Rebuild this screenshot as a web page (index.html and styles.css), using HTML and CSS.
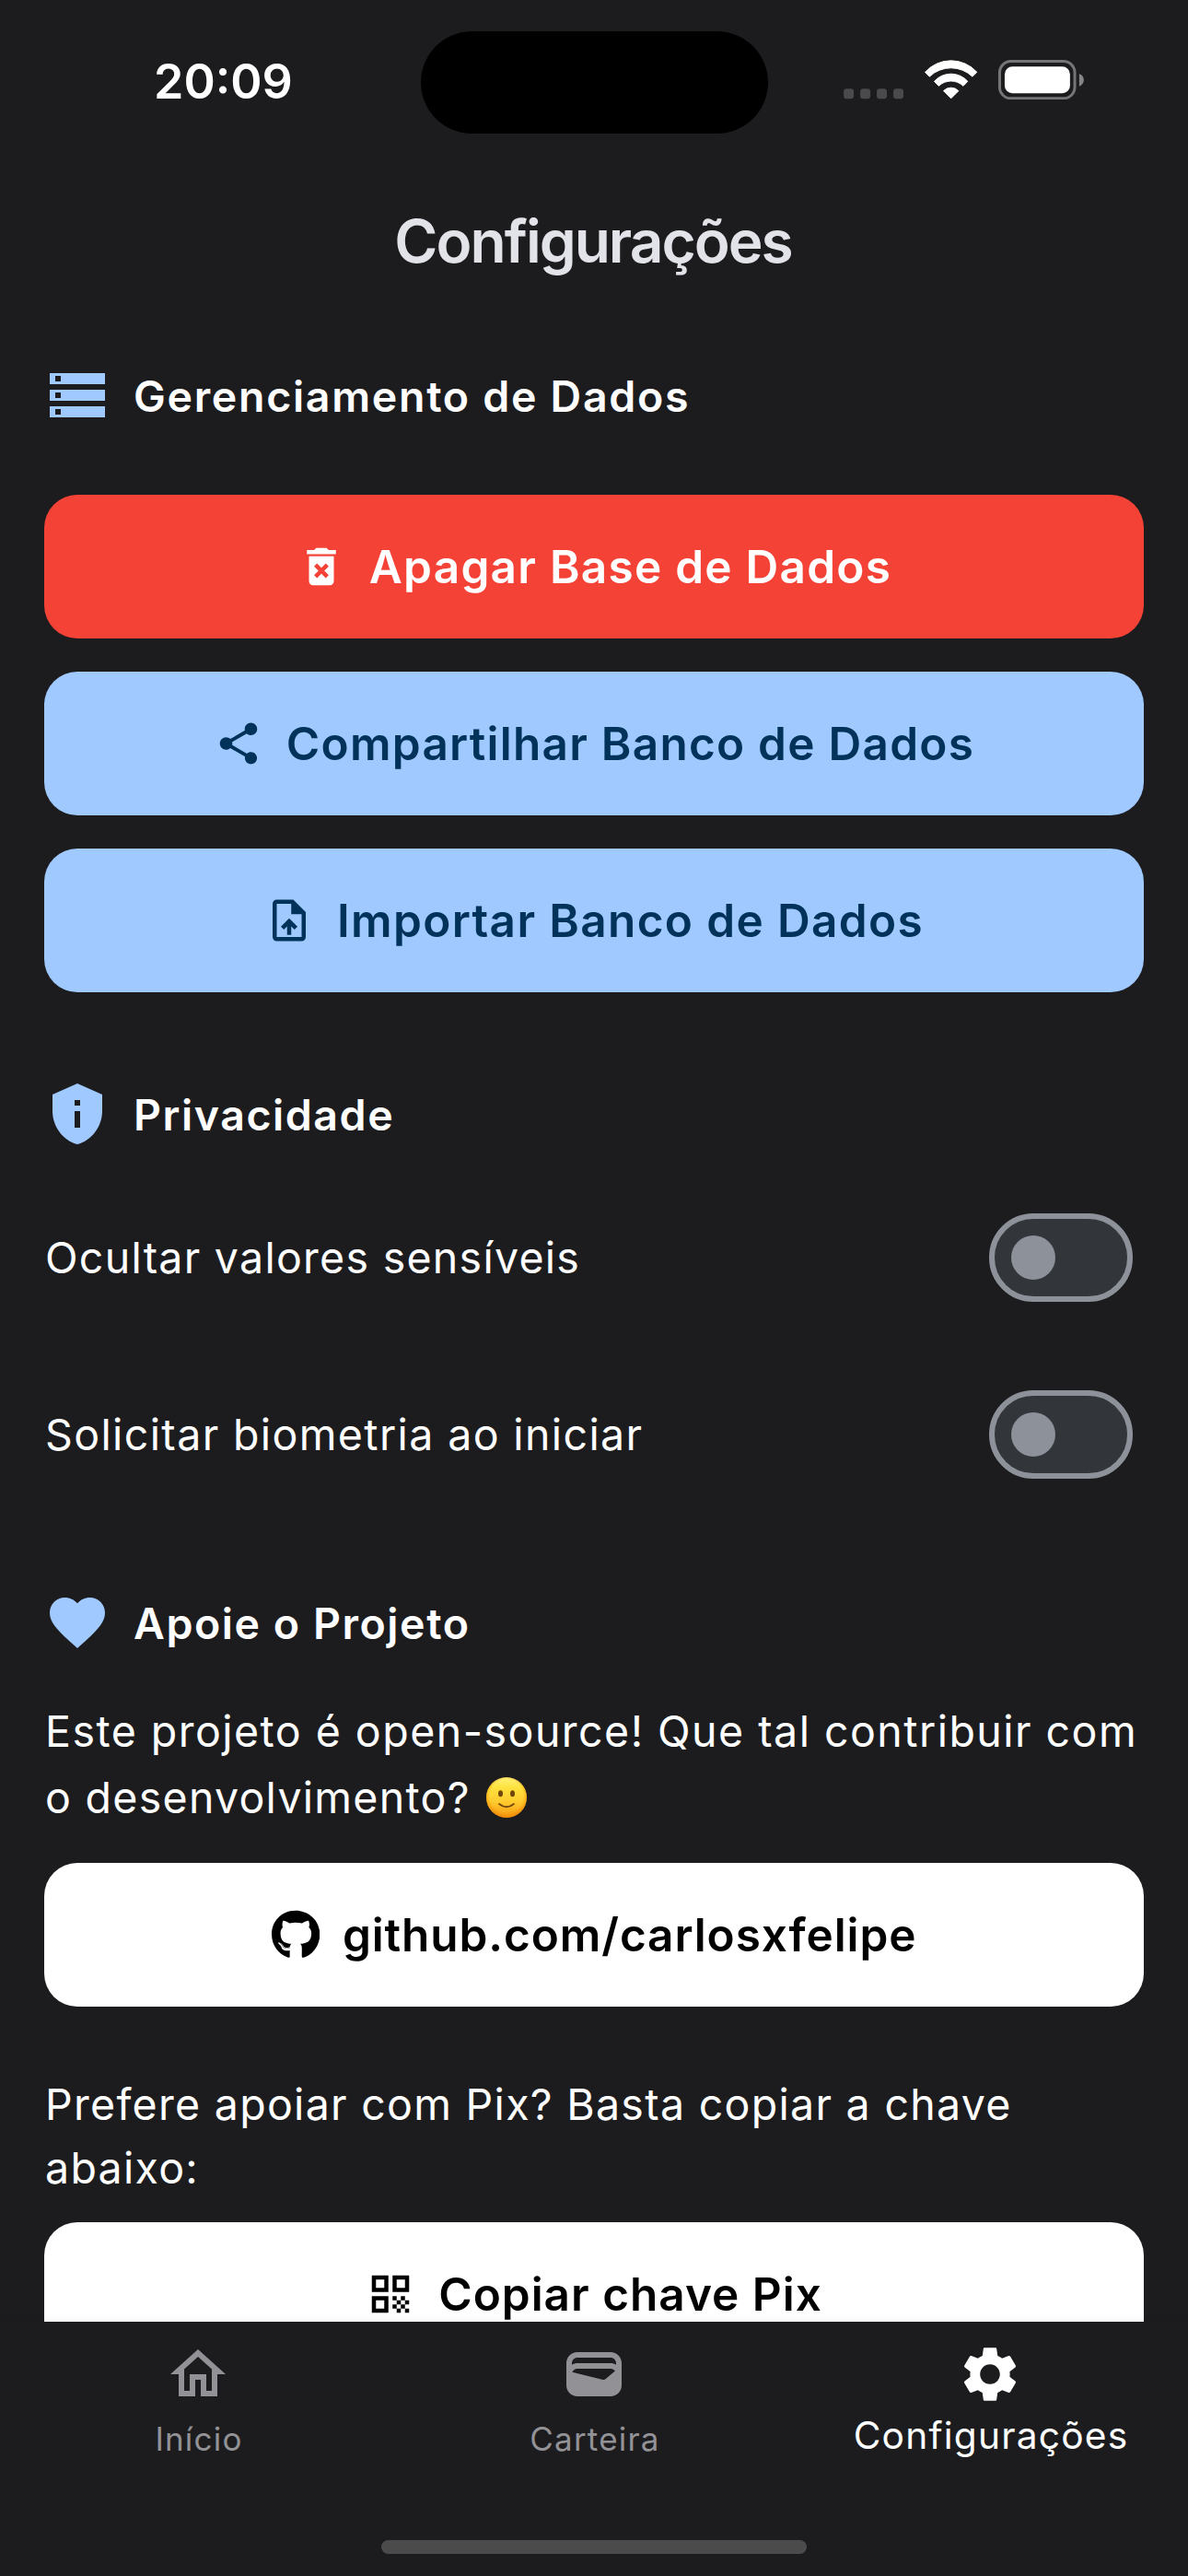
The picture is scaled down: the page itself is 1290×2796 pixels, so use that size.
FILE: index.html
```html
<!DOCTYPE html>
<html lang="pt-BR">
<head>
<meta charset="utf-8">
<title>Configurações</title>
<link rel="stylesheet" href="styles.css">
</head>
<body>
<div class="screen">
  <div class="status-bar">
    <div class="clock">20:09</div>
    <div class="island"></div>
    <svg class="indicators" viewBox="48 44 784 130" aria-hidden="true">
      <g fill="#4a4a4c">
        <rect x="48" y="138" width="33" height="33" rx="10"/>
        <rect x="102" y="138" width="33" height="33" rx="10"/>
        <rect x="156" y="138" width="33" height="33" rx="10"/>
        <rect x="210" y="138" width="33" height="33" rx="10"/>
      </g>
      <g fill="#fff" stroke="#fff" stroke-width="3" stroke-linejoin="round">
        <path d="M313.500 84A114 114 0 0 1 482.500 84L468 98.500A101 101 0 0 0 328 98.500Z"/>
        <path d="M343.500 114A73 73 0 0 1 452.500 114L438 129A58 58 0 0 0 358 129Z"/>
        <path d="M373.500 145A34 34 0 0 1 422.500 145L398 169.500Z"/>
      </g>
      <rect x="556.500" y="48.500" width="245" height="121" rx="37" fill="none" stroke="#757577" stroke-width="9"/>
      <rect x="573" y="66" width="213" height="87" rx="25" fill="#fff"/>
      <path d="M816 89C836 96 836 123 816 130Z" fill="#858587"/>
    </svg>
  </div>

  <header class="app-bar"><h1>Configurações</h1></header>

  <main class="content">
    <section class="section data">
      <div class="heading">
        <svg class="icon-lg" viewBox="0 0 24 24"><path d="M2 20h20v-4H2v4zm2-3h2v2H4v-2zM2 4v4h20V4H2zm4 3H4V5h2v2zm-4 7h20v-4H2v4zm2-3h2v2H4v-2z"/></svg>
        <h2 class="ls-data">Gerenciamento de Dados</h2>
      </div>
      <div class="buttons">
        <button class="btn danger">
          <svg class="icon-sm" viewBox="0 0 24 24"><path d="M6 19c0 1.100.9 2 2 2h8c1.100 0 2-.9 2-2V7H6v12zm2.460-7.120l1.410-1.410L12 12.590l2.120-2.120 1.410 1.410L13.410 14l2.120 2.120-1.410 1.410L12 15.410l-2.120 2.120-1.410-1.410L10.590 14l-2.130-2.120zM15.500 4l-1-1h-5l-1 1H5v2h14V4z"/></svg>
          <span>Apagar Base de Dados</span>
        </button>
        <button class="btn primary">
          <svg class="icon-sm" viewBox="0 0 24 24"><path d="M18 16.080c-.76 0-1.440.3-1.960.77L8.910 12.700c.05-.23.09-.46.09-.7s-.04-.47-.09-.7l7.050-4.110c.54.5 1.250.81 2.040.81 1.660 0 3-1.340 3-3s-1.340-3-3-3-3 1.340-3 3c0 .24.04.47.09.7L8.040 9.810C7.500 9.310 6.790 9 6 9c-1.660 0-3 1.340-3 3s1.340 3 3 3c.79 0 1.500-.31 2.040-.81l7.120 4.160c-.05.21-.08.43-.08.65 0 1.610 1.310 2.920 2.920 2.920s2.920-1.310 2.920-2.920-1.310-2.920-2.920-2.920z"/></svg>
          <span>Compartilhar Banco de Dados</span>
        </button>
        <button class="btn primary import">
          <svg class="icon-sm" viewBox="0 0 24 24"><path d="M14 2H6c-1.100 0-1.990.9-1.990 2L4 20c0 1.100.89 2 1.990 2H18c1.100 0 2-.9 2-2V8l-6-6zm4 18H6V4h7v5h5v11zM8 15.010l1.410 1.410L11 14.840V19h2v-4.160l1.590 1.590L16 15.010 12.010 11z"/></svg>
          <span>Importar Banco de Dados</span>
        </button>
      </div>
    </section>

    <section class="section privacy">
      <div class="heading">
        <svg class="icon-lg" viewBox="0 0 24 24"><path d="M12 1L3 5v6c0 5.550 3.840 10.740 9 12 5.160-1.260 9-6.450 9-12V5L12 1zm-1 6h2v2h-2V7zm0 4h2v6h-2v-6z"/></svg>
        <h2>Privacidade</h2>
      </div>
      <div class="setting">
        <span class="ls-hide">Ocultar valores sensíveis</span>
        <div class="switch" role="switch" aria-checked="false"><i class="knob"></i></div>
      </div>
      <div class="setting">
        <span class="ls-bio">Solicitar biometria ao iniciar</span>
        <div class="switch" role="switch" aria-checked="false"><i class="knob"></i></div>
      </div>
    </section>

    <section class="section support">
      <div class="heading">
        <svg class="icon-lg" viewBox="0 0 24 24"><path d="M12 21.350l-1.450-1.320C5.400 15.360 2 12.280 2 8.500 2 5.420 4.420 3 7.500 3c1.740 0 3.410.81 4.500 2.090C13.090 3.810 14.760 3 16.500 3 19.580 3 22 5.420 22 8.500c0 3.780-3.400 6.860-8.550 11.540L12 21.350z"/></svg>
        <h2>Apoie o Projeto</h2>
      </div>
      <p class="contribute"><span class="ls-open">Este projeto é open-source! Que tal contribuir com</span><br><span class="ls-dev">o desenvolvimento?</span><svg class="smile" viewBox="0 0 44 44" role="img" aria-label="🙂">
        <defs>
          <linearGradient id="face" x1="0" y1="0" x2="0" y2="1"><stop offset="0" stop-color="#fff27a"/><stop offset=".25" stop-color="#ffe23e"/><stop offset=".6" stop-color="#ffcb2e"/><stop offset="1" stop-color="#f79a12"/></linearGradient>
          <radialGradient id="rim" cx=".5" cy=".46" r=".54"><stop offset=".75" stop-color="#f08a00" stop-opacity="0"/><stop offset="1" stop-color="#e87d00" stop-opacity=".65"/></radialGradient>
        </defs>
        <circle cx="22" cy="22" r="22" fill="url(#face)"/>
        <circle cx="22" cy="22" r="22" fill="url(#rim)"/>
        <ellipse cx="15.500" cy="17.800" rx="2.500" ry="3.500" fill="#704709"/>
        <ellipse cx="28.500" cy="17.800" rx="2.500" ry="3.500" fill="#704709"/>
        <path d="M14 29Q22 35.500 30 29" fill="none" stroke="#704709" stroke-width="1.700" stroke-linecap="round"/>
      </svg></p>
      <button class="btn light github">
        <svg class="icon-gh" viewBox="0 0 496 512"><path d="M165.900 397.400c0 2-2.300 3.600-5.200 3.600-3.300.3-5.600-1.300-5.600-3.600 0-2 2.300-3.600 5.200-3.600 3-.3 5.600 1.300 5.600 3.600zm-31.100-4.500c-.7 2 1.300 4.300 4.300 4.900 2.600 1 5.600 0 6.200-2s-1.300-4.300-4.300-5.200c-2.600-.7-5.500.3-6.200 2.300zm44.200-1.700c-2.900.7-4.900 2.600-4.600 4.900.3 2 2.900 3.300 5.900 2.600 2.900-.7 4.900-2.600 4.600-4.600-.3-1.900-3-3.200-5.900-2.900zM244.800 8C106.100 8 0 113.300 0 252c0 110.900 69.800 205.800 169.500 239.200 12.800 2.300 17.300-5.600 17.300-12.100 0-6.200-.3-40.400-.3-61.400 0 0-70 15-84.700-29.800 0 0-11.400-29.100-27.800-36.600 0 0-22.900-15.700 1.600-15.400 0 0 24.900 2 38.600 25.800 21.900 38.600 58.600 27.500 72.900 20.900 2.300-16 8.800-27.100 16-33.700-55.900-6.200-112.300-14.300-112.300-110.500 0-27.500 7.600-41.300 23.600-58.900-2.600-6.500-11.100-33.300 2.600-67.900 20.900-6.500 69 27 69 27 20-5.600 41.500-8.500 62.800-8.500s42.800 2.900 62.800 8.500c0 0 48.100-33.600 69-27 13.700 34.700 5.200 61.400 2.600 67.900 16 17.700 25.800 31.500 25.800 58.900 0 96.500-58.900 104.200-114.800 110.500 9.200 7.900 17 22.900 17 46.400 0 33.700-.3 75.400-.3 83.600 0 6.500 4.600 14.400 17.300 12.100C428.200 457.800 496 362.900 496 252 496 113.300 383.500 8 244.800 8zM97.200 352.900c-1.300 1-1 3.300.7 5.200 1.600 1.600 3.900 2.300 5.200 1 1.300-1 1-3.300-.7-5.200-1.600-1.600-3.900-2.300-5.200-1zm-10.800-8.100c-.7 1.300.3 2.900 2.300 3.900 1.600 1 3.600.7 4.300-.7.7-1.300-.3-2.900-2.300-3.900-2-.6-3.600-.3-4.300.7zm32.400 35.600c-1.600 1.300-1 4.300 1.300 6.200 2.300 2.300 5.200 2.600 6.500 1 1.300-1.300.7-4.300-1.300-6.200-2.200-2.300-5.200-2.600-6.500-1zm-11.400-14.700c-1.600 1-1.600 3.600 0 5.900 1.600 2.300 4.300 3.300 5.600 2.300 1.600-1.300 1.600-3.900 0-6.200-1.400-2.300-4-3.300-5.600-2z"/></svg>
        <span>github.com/carlosxfelipe</span>
      </button>
      <p class="pix-text">Prefere apoiar com Pix? Basta copiar a chave<br>abaixo:</p>
      <button class="btn light pix">
        <svg class="icon-sm" viewBox="0 0 24 24"><path d="M3 11h8V3H3v8zm2-6h4v4H5V5zM3 21h8v-8H3v8zm2-6h4v4H5v-4zM13 3v8h8V3h-8zm6 6h-4V5h4v4zM19 19h2v2h-2zM13 13h2v2h-2zM15 15h2v2h-2zM13 17h2v2h-2zM15 19h2v2h-2zM17 17h2v2h-2zM17 13h2v2h-2zM19 15h2v2h-2z"/></svg>
        <span>Copiar chave Pix</span>
      </button>
    </section>
  </main>

  <nav class="bottom-nav">
    <div class="tabs">
      <div class="tab">
        <svg class="icon-lg" viewBox="0 0 24 24"><path d="M12 5.690l5 4.500V18h-2v-6H9v6H7v-7.810l5-4.500M12 3L2 12h3v8h6v-6h2v6h6v-8h3L12 3z"/></svg>
        <span>Início</span>
      </div>
      <div class="tab">
        <svg class="icon-lg" viewBox="0 0 24 24"><path d="M18 4H6C3.790 4 2 5.790 2 8v8c0 2.210 1.790 4 4 4h12c2.210 0 4-1.790 4-4V8c0-2.210-1.790-4-4-4zm-1.860 9.770c-.24.2-.57.28-.88.2L4.150 11.250C4.450 10.520 5.160 10 6 10h12c.67 0 1.260.34 1.630.84l-3.490 2.930zM6 6h12c1.100 0 2 .9 2 2v.55c-.59-.34-1.270-.55-2-.55H6c-.73 0-1.410.21-2 .55V8c0-1.100.9-2 2-2z"/></svg>
        <span>Carteira</span>
      </div>
      <div class="tab active">
        <svg class="icon-lg" viewBox="0 0 24 24"><path d="M19.140 12.940c.04-.3.06-.61.06-.94 0-.32-.02-.64-.07-.94l2.030-1.580c.18-.14.23-.41.12-.61l-1.920-3.320c-.12-.22-.37-.29-.59-.22l-2.390.96c-.5-.38-1.030-.7-1.620-.94l-.36-2.540c-.04-.24-.24-.41-.48-.41h-3.840c-.24 0-.43.17-.47.41l-.36 2.540c-.59.24-1.130.57-1.620.94l-2.390-.96c-.22-.08-.47 0-.59.22L2.740 8.870c-.12.21-.08.47.12.61l2.030 1.580c-.05.3-.09.63-.09.94s.02.64.07.94l-2.030 1.580c-.18.14-.23.41-.12.61l1.920 3.320c.12.22.37.29.59.22l2.390-.96c.5.38 1.030.7 1.620.94l.36 2.540c.05.24.24.41.48.41h3.840c.24 0 .44-.17.47-.41l.36-2.540c.59-.24 1.130-.56 1.620-.94l2.390.96c.22.08.47 0 .59-.22l1.920-3.320c.12-.22.07-.47-.12-.61l-2.010-1.580zM12 15.600c-1.980 0-3.600-1.620-3.600-3.600s1.620-3.600 3.600-3.600 3.600 1.620 3.600 3.600-1.620 3.600-3.600 3.600z"/></svg>
        <span>Configurações</span>
      </div>
    </div>
    <div class="home-indicator"></div>
  </nav>
</div>
</body>
</html>
```
FILE: styles.css
```css
* { box-sizing: border-box; }

body {
  margin: 0;
  background: #1c1c1e;
  color: #fff;
  font-family: Inter, "Liberation Sans", sans-serif;
}

h1, h2, p { margin: 0; }
svg { display: block; flex: none; fill: currentColor; }

.screen {
  width: 1290px;
  height: 2796px;
  display: flex;
  flex-direction: column;
  overflow: hidden;
}

/* Status bar */
.status-bar {
  flex: none;
  height: 177px;
  display: grid;
  grid-template-columns: 456.5px 377px 456.5px;
  align-items: center;
}
.clock {
  padding-left: 167px;
  font-size: 52px;
  font-weight: 580;
  line-height: 64px;
}
.island { height: 111px; margin-top: 1px; border-radius: 56px; background: #000; }
.indicators { width: 261.3px; height: 43.3px; margin: 0 0 4px 82.5px; }

/* App bar */
.app-bar {
  flex: none;
  height: 168px;
  padding-top: 1px;
  display: flex;
  align-items: center;
  justify-content: center;
}
.app-bar h1 {
  color: #e2e2e9;
  font-size: 64px;
  font-weight: 580;
  line-height: 80px;
  letter-spacing: -2px;
  margin-right: 2px;
}

/* Scrollable content */
.content {
  flex: 1;
  min-height: 0;
  overflow: hidden;
  padding: 48px 48px 0;
}
.section + .section { margin-top: 96px; }
.heading { display: flex; align-items: center; gap: 25px; height: 72px; }
.heading .icon-lg { color: #a0c9ff; }
.heading h2 {
  padding-top: 1px;
  font-size: 46.5px;
  font-weight: 580;
  line-height: 60px;
  letter-spacing: 1.55px;
}
.heading .ls-data { letter-spacing: 1.7px; }
.icon-lg { width: 72px; height: 72px; }
.icon-sm { width: 54px; height: 54px; }
.icon-gh { width: 52.3px; height: 54px; }

.buttons { display: flex; flex-direction: column; gap: 36px; margin-top: 72px; }
.btn {
  width: 100%;
  height: 156px;
  padding: 0;
  border: 0;
  border-radius: 36px;
  display: flex;
  align-items: center;
  justify-content: center;
  gap: 25px;
  font: 580 49.5px/60px Inter, "Liberation Sans", sans-serif;
  letter-spacing: 1.25px;
}
.danger { background: #f44336; color: #fff; }
.primary { background: #a0c9ff; color: #00325a; }
.light { background: #fff; color: #000; }
.import { letter-spacing: 1.36px; }
.github { letter-spacing: .9px; }
.pix { letter-spacing: 1px; }

.setting {
  height: 144px;
  margin-top: 48px;
  padding: 0 12px 0 1px;
  display: flex;
  align-items: center;
  justify-content: space-between;
  font-size: 46.5px;
  line-height: 60px;
}
.ls-hide { letter-spacing: 1.27px; }
.ls-bio { letter-spacing: 1.38px; }
.switch {
  width: 156px;
  height: 96px;
  padding-left: 18px;
  border: 6px solid #8d9199;
  border-radius: 48px;
  background: #32353a;
  display: flex;
  align-items: center;
}
.knob { width: 48px; height: 48px; border-radius: 50%; background: #8d9199; }

.contribute, .pix-text { padding-left: 1px; font-size: 46.5px; white-space: nowrap; }
.contribute { margin-top: 46px; height: 144px; line-height: 72px; }
.ls-open { letter-spacing: 1.47px; }
.ls-dev { letter-spacing: 1.28px; }
.smile { display: inline-block; width: 44px; height: 44px; margin-left: 17.5px; vertical-align: -5px; }
.github { margin-top: 35px; }
.pix-text { margin: 72px 0 24px; line-height: 69px; letter-spacing: 1.29px; }

/* Bottom navigation */
.bottom-nav {
  position: relative;
  flex: none;
  height: 276px;
  background: #1c1c1e;
  box-shadow: 0 0 12px rgba(0, 0, 0, .05);
  display: flex;
  flex-direction: column;
  align-items: center;
}
.tabs { width: 100%; height: 237px; display: grid; grid-template-columns: repeat(3, 1fr); }
.tab {
  padding-top: 21px;
  display: flex;
  flex-direction: column;
  align-items: center;
  color: #929296;
}
.tab span { margin: 13px 0 0 2px; font-size: 35px; line-height: 42px; letter-spacing: 1.2px; }
.tab.active { color: #fff; }
.tab.active span { margin-top: 6px; font-size: 40.7px; line-height: 50px; letter-spacing: 1.2px; }
.home-indicator { width: 462px; height: 15px; border-radius: 8px; background: #4b4b4b; }
```
